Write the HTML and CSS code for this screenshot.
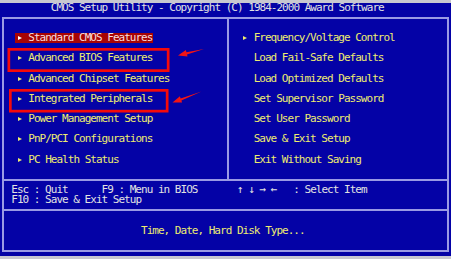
FILE: index.html
```html
<!DOCTYPE html>
<html lang="en">
<head>
  <meta charset="UTF-8">
  <title>CMOS Setup Utility</title>
  <link rel="stylesheet" href="styles.css">
</head>
<body>
  <div class="screen">
    <div class="title">CMOS Setup Utility - Copyright (C) 1984-2000 Award Software</div>

    <div class="frame">
      <div class="menu">
        <ul class="col col-left">
          <li class="item active"><span class="mark"></span>Standard CMOS Features</li>
          <li class="item"><span class="mark"></span>Advanced BIOS Features</li>
          <li class="item"><span class="mark"></span>Advanced Chipset Features</li>
          <li class="item"><span class="mark"></span>Integrated Peripherals</li>
          <li class="item"><span class="mark"></span>Power Management Setup</li>
          <li class="item"><span class="mark"></span>PnP/PCI Configurations</li>
          <li class="item"><span class="mark"></span>PC Health Status</li>
        </ul>
        <ul class="col col-right">
          <li class="item"><span class="mark"></span>Frequency/Voltage Control</li>
          <li class="item"><span class="mark none"></span>Load Fail-Safe Defaults</li>
          <li class="item"><span class="mark none"></span>Load Optimized Defaults</li>
          <li class="item"><span class="mark none"></span>Set Supervisor Password</li>
          <li class="item"><span class="mark none"></span>Set User Password</li>
          <li class="item"><span class="mark none"></span>Save &amp; Exit Setup</li>
          <li class="item"><span class="mark none"></span>Exit Without Saving</li>
        </ul>
      </div>

      <div class="keys">
        <div class="key-row">
          <span class="seg w16">Esc : Quit</span>
          <span class="seg w24">F9 : Menu in BIOS</span>
          <span class="seg w10 arrows"><i>↑</i><i>↓</i><i>→</i><i>←</i></span>
          <span class="seg">: Select Item</span>
        </div>
        <div class="key-row">
          <span class="seg">F10 : Save &amp; Exit Setup</span>
        </div>
      </div>

      <div class="help">Time, Date, Hard Disk Type...</div>
    </div>
  </div>

  <!-- red markup drawn over the screenshot -->
  <svg class="marks" width="451" height="259" viewBox="0 0 451 259">
    <rect x="8.85" y="49.35" width="159.3" height="21.3" fill="none" stroke="#f50a0a" stroke-width="2.7"/>
    <rect x="10.35" y="90.35" width="156.8" height="20.8" fill="none" stroke="#f50a0a" stroke-width="2.7"/>
    <polygon points="178,55.5 185.9,50.1 186.4,52.2 204,49 187,54.4 187.5,56.5" fill="#f21414"/>
    <polygon points="172.5,102.5 179.9,96.3 180.6,98.4 201.5,91.5 181.4,100.4 182.1,102.5" fill="#f21414"/>
  </svg>
</body>
</html>
```

FILE: styles.css
```css
body {
  --row: 10.13px;
  --col: 5.64px;
  margin: 0;
  padding-top: 2.8px;
  width: 451px;
  height: 259px;
  box-sizing: border-box;
  position: relative;
  overflow: hidden;
  background: #c8c8d0;
  font-family: "DejaVu Sans Mono", monospace;
  font-size: 11px;
  letter-spacing: -0.98px;
  line-height: var(--row);
}

.screen {
  height: calc(var(--row) * 25);
  background-color: #0402a6;
  color: #e2e2e2;
}

.title {
  height: var(--row);
  padding-left: calc(var(--col) * 9);
}

.frame {
  margin: calc(var(--row) / 2 - 1px) 2px 0 2px;
  border: 2px solid #9a9ae4;
}

.menu {
  display: flex;
  padding: calc(var(--row) * 1.5 - 1px) 0;
  border-bottom: 2px solid #9a9ae4;
  color: #eeec70;
}

.col {
  list-style: none;
  margin: 0;
  padding: 0;
  display: flex;
  flex-direction: column;
  align-items: flex-start;
  gap: var(--row);
}

.col-left {
  width: 225.4px;
  box-sizing: border-box;
  border-right: 2px solid #9a9ae4;
  margin: calc(var(--row) * -1.5 + 1px) 0;
  padding: calc(var(--row) * 1.5 - 1px) 0;
}

.col-right {
  flex: 1;
}

.item {
  display: flex;
  align-items: center;
  height: var(--row);
  margin-left: 11px;
  padding: 0 1px 0 2px;
  white-space: nowrap;
}

.item.active {
  background-color: #a80404;
  color: #f6dede;
}

.mark {
  width: calc(var(--col) * 2);
  height: var(--row);
  display: flex;
  align-items: center;
}

.mark::before {
  content: "";
  margin-left: 1px;
  border-left: 4px solid #eeec70;
  border-top: 2.5px solid transparent;
  border-bottom: 2.5px solid transparent;
}

.item.active .mark::before {
  border-left-color: #ffffff;
}

.mark.none::before {
  display: none;
}

.keys {
  padding: calc(var(--row) / 2 - 1px) 0 calc(var(--row) / 2 - 1px) calc(var(--col) * 2 - 4px);
  border-bottom: 2px solid #9a9ae4;
}

.key-row {
  display: flex;
  height: var(--row);
  white-space: nowrap;
}

.seg {
  display: inline-block;
}

.w16 { width: calc(var(--col) * 16); }
.w24 { width: calc(var(--col) * 24); }
.w10 { width: calc(var(--col) * 10); }

.arrows {
  display: flex;
}

.arrows i {
  font-style: normal;
  width: calc(var(--col) * 2);
}

.help {
  padding: calc(var(--row) * 1.5 - 1px) 0 calc(var(--row) * 1.5 - 1px) calc(var(--col) * 25 - 4px);
  height: var(--row);
  color: #eeec70;
}

.marks {
  position: absolute;
  top: 0;
  left: 0;
  pointer-events: none;
}
```
